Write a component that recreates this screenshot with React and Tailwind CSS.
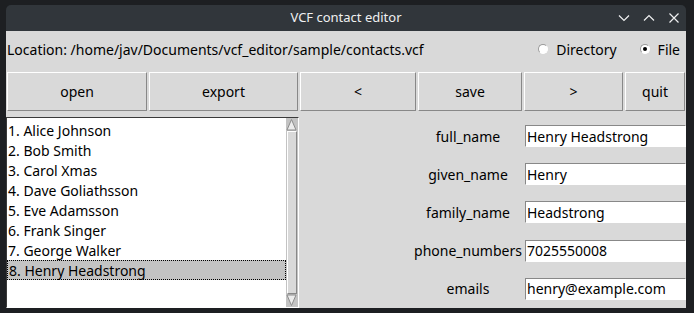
import React from 'react';

const contacts = [
  'Alice Johnson',
  'Bob Smith',
  'Carol Xmas',
  'Dave Goliathsson',
  'Eve Adamsson',
  'Frank Singer',
  'George Walker',
  'Henry Headstrong',
];

const fields = [
  ['full_name', 'Henry Headstrong'],
  ['given_name', 'Henry'],
  ['family_name', 'Headstrong'],
  ['phone_numbers', '7025550008'],
  ['emails', 'henry@example.com'],
];

const buttons = [
  ['open', 'w-[140px]'],
  ['export', 'w-[149px]'],
  ['<', 'w-[116px]'],
  ['save', 'w-[104px]'],
  ['>', 'w-[99px]'],
  ['quit', 'w-[60px]'],
];

function Radio({ label, checked }) {
  return (
    <label className="flex items-center gap-[8px]">
      <span className="flex h-[10px] w-[10px] items-center justify-center rounded-full border border-t-[#9a9a9a] border-l-[#9a9a9a] border-b-white border-r-white bg-white">
        {checked && <span className="h-[4px] w-[4px] rounded-full bg-black" />}
      </span>
      <span>{label}</span>
    </label>
  );
}

function Arrow({ up }) {
  return (
    <svg width="11" height="13" viewBox="0 0 11 13" className="block">
      <polygon
        points={up ? '5.5,1.5 10,12 1,12' : '1,1 10,1 5.5,11.5'}
        fill="#ececec"
        stroke="#8c8c8c"
        strokeWidth="1"
      />
    </svg>
  );
}

export default function App() {
  return (
    <div
      className="h-[313px] w-[694px] overflow-hidden bg-[#1d1f22] pl-[6px] pr-[8px] pt-[5px] text-[14px] text-black"
      style={{ fontFamily: '"Noto Sans", sans-serif' }}
    >
      <div className="flex h-[303px] flex-col overflow-hidden rounded-t-[5px]">
        {/* title bar */}
        <div className="relative flex h-[26px] shrink-0 items-center justify-center bg-[#31363b] text-[13px] text-[#eff0f1]">
          VCF contact editor
          <div className="absolute right-[6px] top-[7px] flex gap-[13px]">
            <svg width="12" height="12" viewBox="0 0 12 12">
              <path d="M1 3.5 L6 8.5 L11 3.5" fill="none" stroke="#eff0f1" strokeWidth="1.2" />
            </svg>
            <svg width="12" height="12" viewBox="0 0 12 12">
              <path d="M1 8.5 L6 3.5 L11 8.5" fill="none" stroke="#eff0f1" strokeWidth="1.2" />
            </svg>
            <svg width="12" height="12" viewBox="0 0 12 12">
              <path d="M1.5 1.5 L10.5 10.5 M10.5 1.5 L1.5 10.5" fill="none" stroke="#eff0f1" strokeWidth="1.2" />
            </svg>
          </div>
        </div>

        <div className="flex flex-1 flex-col bg-[#d9d9d9]">
          {/* location row */}
          <div className="flex h-[36px] items-center pl-[1px] pr-[6px]">
            <span className="flex-1">Location: /home/jav/Documents/vcf_editor/sample/contacts.vcf</span>
            <div className="flex gap-[23px]">
              <Radio label="Directory" />
              <Radio label="File" checked />
            </div>
          </div>

          {/* button row */}
          <div className="mt-[5px] flex h-[39px] gap-[2px] pl-[1px]">
            {buttons.map(([label, w]) => (
              <button
                key={label}
                className={`${w} flex items-center justify-center border border-t-white border-l-white border-b-[#888888] border-r-[#888888] bg-[#d9d9d9]`}
              >
                {label}
              </button>
            ))}
          </div>

          {/* main area */}
          <div className="mt-[6px] flex flex-1">
            <div className="flex w-[293px] border border-t-[#3a3a3a] border-l-[#3a3a3a] border-b-white border-r-white">
              <ul className="flex-1 bg-white pt-[2px]">
                {contacts.map((name, i) => (
                  <li
                    key={name}
                    className={`flex h-[20px] items-center pl-[1px] ${
                      i === 7 ? 'border border-dotted border-black bg-[#c3c3c3]' : ''
                    }`}
                  >
                    {i + 1}. {name}
                  </li>
                ))}
              </ul>
              <div className="flex w-[12px] flex-col bg-[#c3c3c3]">
                <Arrow up />
                <div className="mx-[1px] flex-1 border border-t-white border-l-white border-b-[#888888] border-r-[#888888] bg-[#d9d9d9]" />
                <Arrow />
              </div>
            </div>

            <div className="grid flex-1 grid-rows-5 pl-[2px]">
              {fields.map(([label, value]) => (
                <div key={label} className="flex items-center">
                  <span className="mr-[2px] w-[222px] whitespace-nowrap pl-[112px] text-center">{label}</span>
                  <div className="flex h-[22px] flex-1 items-center border border-t-[#888888] border-l-[#888888] border-b-white border-r-white bg-white pl-[1px]">
                    {value}
                  </div>
                </div>
              ))}
            </div>
          </div>
        </div>
      </div>
    </div>
  );
}
